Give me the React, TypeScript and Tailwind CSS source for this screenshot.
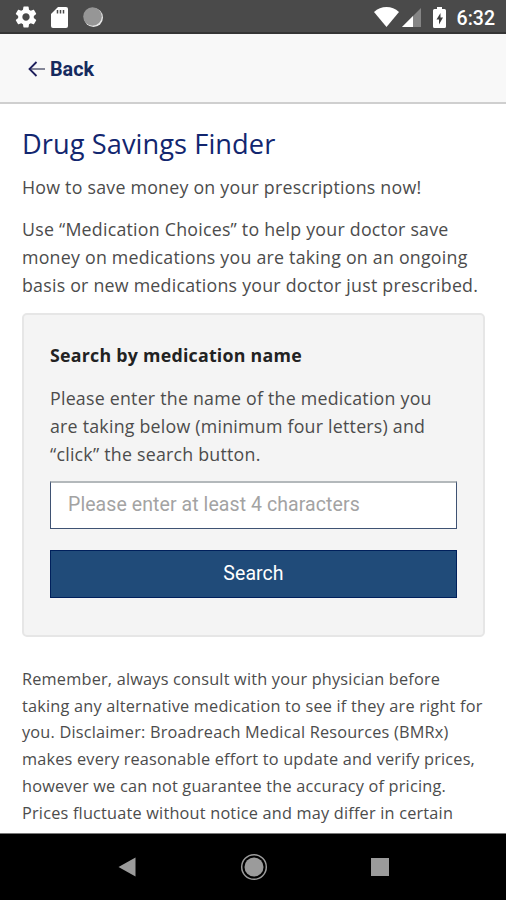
import { useState } from 'react';

const disclaimer = [
  'Remember, always consult with your physician before',
  'taking any alternative medication to see if they are right for',
  'you. Disclaimer: Broadreach Medical Resources (BMRx)',
  'makes every reasonable effort to update and verify prices,',
  'however we can not guarantee the accuracy of pricing.',
  'Prices fluctuate without notice and may differ in certain',
];

function StatusBar() {
  return (
    <div className="flex h-[34px] shrink-0 items-center justify-between border-b-2 border-[#353535] bg-[#4a4a4a] pl-[15px] pr-[11px] pt-[2px] text-white">
      <div className="flex items-center gap-[14px]">
        {/* Settings */}
        <svg className="h-[22px] w-[22px]" viewBox="1.500 1.500 21 21" fill="currentColor">
          <path d="M19.43 12.98c.04-.32.07-.64.07-.98s-.03-.66-.07-.98l2.11-1.65c.19-.15.24-.42.12-.64l-2-3.46c-.12-.22-.39-.3-.61-.22l-2.49 1c-.52-.4-1.08-.73-1.69-.98l-.38-2.65C14.46 2.18 14.25 2 14 2h-4c-.25 0-.46.18-.49.42l-.38 2.65c-.61.25-1.17.59-1.69.98l-2.49-1c-.23-.09-.49 0-.61.22l-2 3.46c-.13.22-.07.49.12.64l2.11 1.65c-.04.32-.07.65-.07.98s.03.66.07.98l-2.11 1.65c-.19.15-.24.42-.12.64l2 3.46c.12.22.39.3.61.22l2.49-1c.52.4 1.08.73 1.69.98l.38 2.65c.03.24.24.42.49.42h4c.25 0 .46-.18.49-.42l.38-2.65c.61-.25 1.17-.59 1.69-.98l2.49 1c.23.09.49 0 .61-.22l2-3.46c.12-.22.07-.49-.12-.64l-2.11-1.65zM12 15.5c-1.93 0-3.5-1.57-3.5-3.5s1.57-3.5 3.5-3.5 3.5 1.57 3.5 3.5-1.57 3.5-3.5 3.5z" />
        </svg>
        {/* SD card */}
        <svg className="h-[21px] w-[17px]" viewBox="0 0 17 21">
          <path d="M7 0h8q2 0 2 2v17q0 2-2 2H2q-2 0-2-2V7z" fill="#fff" />
          <path d="M6.500 3v3.500M9.500 3v3.500M12.500 3v3.500" stroke="#4a4a4a" strokeWidth="1.500" />
        </svg>
        <svg className="ml-[1px] h-[20px] w-[20px]" viewBox="0 0 20 20">
          <circle cx="10.500" cy="10.500" r="9.500" fill="#e8e8e8" />
          <circle cx="9.500" cy="9.500" r="9.300" fill="#969696" />
        </svg>
      </div>
      <div className="flex items-center">
        <svg className="h-[20px] w-[25px]" viewBox="0 0 25 20" fill="currentColor">
          <path d="M12.500 20 25 5C21.500 1.500 17 0 12.500 0S3.500 1.500 0 5z" />
        </svg>
        <svg className="ml-[3px] h-[19px] w-[19px]" viewBox="0 0 19 19">
          <path d="M0 19 19 0v19z" fill="#858585" />
          <path d="M0 19 11 8v11z" fill="#fff" />
        </svg>
        <svg className="ml-[12px] h-[21px] w-[13px]" viewBox="0 0 13 21">
          <path d="M4 0h5v2h2.500Q13 2 13 3.500v16q0 1.500-1.500 1.500h-10Q0 21 0 19.500v-16Q0 2 1.500 2H4z" fill="#fff" />
          <path d="M7.500 6 3.500 12.500H6V17.500l4-7H7.500z" fill="#3c3c3c" />
        </svg>
        <span className="ml-[11px] pt-[3px] font-[Roboto] text-[19.500px] font-medium leading-none">6:32</span>
      </div>
    </div>
  );
}

function NavBar() {
  return (
    <nav className="flex h-[67px] shrink-0 items-center border-t border-[#777] bg-black">
      <div className="flex w-full items-center justify-between pl-[118px] pr-[117px]">
        <svg className="h-[20px] w-[18px]" viewBox="0 0 18 20">
          <path d="M17.500.500v19L.500 10z" fill="#9b9b9b" />
        </svg>
        <svg className="h-[28px] w-[28px]" viewBox="0 0 28 28">
          <circle cx="14" cy="14" r="12.300" fill="none" stroke="#9b9b9b" strokeWidth="1.500" />
          <circle cx="14" cy="14" r="9.500" fill="#9b9b9b" />
        </svg>
        <div className="h-[18px] w-[18px] bg-[#9b9b9b]" />
      </div>
    </nav>
  );
}

export default function App() {
  const [query, setQuery] = useState('');

  return (
    <div className="flex h-[900px] w-[506px] flex-col overflow-hidden bg-white font-['Open_Sans',sans-serif] text-[#4c4c4c]">
      <StatusBar />
      <header className="flex h-[70px] shrink-0 items-center border-b-2 border-[#cfcfcf] bg-[#f8f8f8] pl-[28px] pt-[4px]">
        <button className="flex items-center gap-[5px] font-[Roboto] text-[19.800px] font-bold text-[#152a5e]">
          <svg className="-mt-[2px] h-[16px] w-[17px]" viewBox="0 0 17 16" fill="none" strokeWidth="1.800">
            <path d="M17 8H2" stroke="#77798c" />
            <path d="M8.500 1l-7 7 7 7" stroke="#1e1f5c" />
          </svg>
          Back
        </button>
      </header>

      <main className="min-h-0 flex-1 overflow-hidden pl-[22px] pr-[21px] pt-[22px]">
        <h1 className="text-[27.200px] leading-[36px] tracking-[0.080px] text-[#12266f]">Drug Savings Finder</h1>
        <p className="mt-[11px] whitespace-nowrap text-[17.800px] leading-[28px] tracking-[0.230px]">How to save money on your prescriptions now!</p>
        <p className="mt-[14px] whitespace-nowrap text-[17.800px] leading-[28px] tracking-[0.230px]">
          Use “Medication Choices” to help your doctor save<br />
          money on medications you are taking on an ongoing<br />
          basis or new medications your doctor just prescribed.
        </p>

        <section className="mt-[14px] h-[324px] rounded-[5px] border-2 border-[#e6e6e6] bg-[#f4f4f4] px-[26px] pt-[26px]">
          <h2 className="text-[17.800px] font-bold leading-[28px] tracking-[0.240px] text-[#222]">Search by medication name</h2>
          <p className="mt-[15px] whitespace-nowrap text-[17.800px] leading-[28px] tracking-[0.230px]">
            Please enter the name of the medication you<br />
            are taking below (minimum four letters) and<br />
            “click” the search button.
          </p>
          <input
            className="mt-[13px] block h-[48px] w-full border border-t-2 border-[#3f5273] border-t-[#b3b8bb] bg-white px-[17px] pb-[3px] font-[Roboto] text-[19.500px] tracking-[0.080px] text-[#444] outline-none placeholder:text-[#a3a3a3]"
            placeholder="Please enter at least 4 characters"
            value={query}
            onChange={(e) => setQuery(e.target.value)}
          />
          <button className="mt-[21px] block h-[48px] w-full border border-[#00205c] bg-[#204b79] pb-[1px] font-[Roboto] text-[19.500px] tracking-[0.080px] text-white">
            Search
          </button>
        </section>

        <p className="mt-[29px] whitespace-nowrap text-[16.300px] leading-[26.700px] tracking-[0.200px]">
          {disclaimer.map((line) => (
            <span key={line} className="block">{line}</span>
          ))}
        </p>
      </main>
      <NavBar />
    </div>
  );
}
